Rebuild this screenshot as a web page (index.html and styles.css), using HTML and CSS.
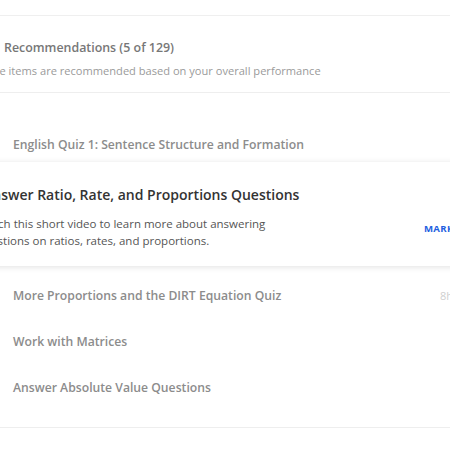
FILE: index.html
```html
<!DOCTYPE html>
<html>
<head>
<meta charset="utf-8">
<link rel="stylesheet" href="styles.css">
</head>
<body>
<div class="page">
  <div class="panel">
    <div class="head">
      <div class="head-title">Recommendations (5 of 129)</div>
      <div class="head-sub">These items are recommended based on your overall performance</div>
    </div>
    <div class="list">
      <div class="row"><span class="row-title">English Quiz 1: Sentence Structure and Formation</span></div>
      <div class="card">
        <div class="card-title">Answer Ratio, Rate, and Proportions Questions</div>
        <div class="card-body">
          <div class="card-desc">Watch this short video to learn more about answering<br>questions on ratios, rates, and proportions.</div>
          <div class="card-action">MARK AS DONE</div>
        </div>
      </div>
      <div class="row"><span class="row-title">More Proportions and the DIRT Equation Quiz</span><span class="row-meta">8h</span></div>
      <div class="row"><span class="row-title">Work with Matrices</span></div>
      <div class="row"><span class="row-title">Answer Absolute Value Questions</span></div>
    </div>
  </div>
</div>
</body>
</html>
```

FILE: styles.css
```css
html, body {
  margin: 0;
  padding: 0;
  background: #ffffff;
}
.page {
  width: 450px;
  height: 450px;
  overflow: hidden;
  font-family: "Open Sans", "Liberation Sans", sans-serif;
  background: #ffffff;
}
.panel {
  margin-top: 15px;
  margin-left: -40px;
  width: 600px;
  border-top: 1px solid #efefef;
}
.head {
  padding: 23px 0 13px 18px;
  border-bottom: 1px solid #eeeeee;
}
.head-title {
  font-size: 12.4px;
  line-height: 18px;
  font-weight: 600;
  color: #777777;
  padding-left: 26px;
}
.head-sub {
  margin-top: 6px;
  font-size: 11.1px;
  line-height: 16px;
  color: #9a9a9a;
  margin-left: -3px;
}
.list {
  padding: 28px 0 17px;
  border-bottom: 1px solid #eeeeee;
}
.row {
  height: 46px;
  display: flex;
  align-items: center;
  padding-left: 53px;
  padding-right: 0;
}
.row-title {
  font-size: 12.2px;
  font-weight: 600;
  color: #8c8c8c;
  width: 427px;
}
.row-meta {
  font-size: 11px;
  color: #cfcfcf;
}
.card {
  margin: -5px 0 6px 0;
  background: #ffffff;
  box-shadow: 0 1px 6px rgba(0, 0, 0, 0.12);
  padding: 23px 0 17px 23px;
}
.card-title {
  font-size: 14px;
  line-height: 20px;
  font-weight: 600;
  color: #333333;
}
.card-body {
  display: flex;
  align-items: center;
  margin-top: 10px;
}
.card-desc {
  font-size: 11.5px;
  line-height: 17px;
  color: #555555;
  width: 447px;
  margin-left: -6px;
}
.card-action {
  font-size: 9.6px;
  font-weight: 700;
  color: #1f5fe0;
  letter-spacing: 0.3px;
  margin-top: -8px;
}
```
